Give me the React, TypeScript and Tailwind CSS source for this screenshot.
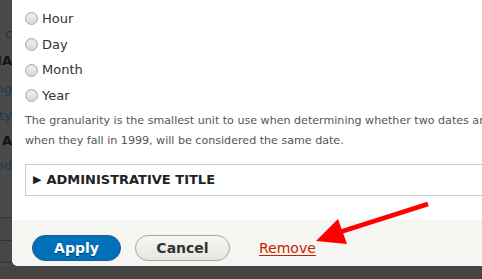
import React from "react";

const font = { fontFamily: '"DejaVu Sans", Verdana, sans-serif' };

function Radio({ label }: { label: string }) {
    return (
        <label className="flex items-center h-[25.7px] gap-[4px]">
            <span className="w-[13px] h-[13px] rounded-full border border-[#a9a9a9] bg-gradient-to-b from-[#f4f4f4] to-[#d6d6d6] shadow-[inset_0_1px_1px_rgba(0,0,0,0.1)]"></span>
            <span className="text-[13px] text-[#333]">{label}</span>
        </label>
    );
}

function Backdrop() {
    return (
        <div className="w-[12px] shrink-0 overflow-hidden bg-[#4a4a4a] flex flex-col items-end text-[13px] whitespace-nowrap">
            <div className="h-[21px]"></div>
            <div className="h-[26px] leading-[26px] text-[#2a2a2a]">line c</div>
            <div className="h-[28px] leading-[28px] font-bold text-[#111]">DIA</div>
            <div className="h-[27px] leading-[27px] text-[#1d3a55]">ing</div>
            <div className="h-[27px] leading-[27px] text-[#1d3a55]">at ty</div>
            <div className="h-[24px] leading-[24px] font-bold text-[#111]">A</div>
            <div className="h-[26px] leading-[26px] text-[#1d3a55]">ed</div>
            <div className="h-[38px]"></div>
            <div className="w-full h-[23px] border-t border-[#333] bg-[#474747]"></div>
            <div className="w-full h-[22px] border-t border-[#333] bg-[#474747]"></div>
            <div className="w-full flex-1 border-t border-[#333]"></div>
        </div>
    );
}

function Arrow() {
    return (
        <svg className="absolute left-0 top-0 pointer-events-none" width="482" height="279" viewBox="0 0 482 279">
            <line x1="428" y1="204" x2="340" y2="232" stroke="#ff0000" strokeWidth="4.5" strokeLinecap="butt" />
            <polygon points="316,241 338,219 347,244" fill="#ff0000" />
        </svg>
    );
}

export default function App() {
    return (
        <div className="relative w-[482px] h-[279px] overflow-hidden bg-[#444]" style={font}>
            <div className="flex h-[266px]">
                <Backdrop />
                <div className="w-[600px] shrink-0 bg-white rounded-bl-[6px] overflow-hidden flex flex-col">
                    <div className="flex-1 pl-[13px] pt-[6px]">
                        <Radio label="Hour" />
                        <Radio label="Day" />
                        <Radio label="Month" />
                        <Radio label="Year" />
                        <p className="mt-[2px] text-[11.1px] leading-[20px] text-[#555] whitespace-nowrap">
                            The granularity is the smallest unit to use when determining whether two dates are the same; for example, if the granularity is "Year" then all dates in 1999, regardless of<br />
                            when they fall in 1999, will be considered the same date.
                        </p>
                        <div className="mt-[13px] h-[32px] border border-[#ccc] flex items-center pl-[7px] gap-[5px]">
                            <span className="text-[11px] text-[#222] leading-none">▶</span>
                            <span className="text-[13px] font-bold text-[#222]">ADMINISTRATIVE TITLE</span>
                        </div>
                    </div>
                    <div className="h-[46px] bg-[#f5f5f2] flex items-start pl-[20px] pt-[15px]">
                        <button className="w-[89px] h-[26px] rounded-full bg-[#0071b8] border border-[#1e5c90] text-white text-[14px] font-bold [text-shadow:0_1px_rgba(0,0,0,0.5)]">
                            Apply
                        </button>
                        <button className="ml-[14px] w-[95px] h-[26px] rounded-full bg-gradient-to-b from-[#f6f6f3] to-[#e7e7df] border border-[#a6a6a6] text-[#333] text-[14px] font-bold">
                            Cancel
                        </button>
                        <a href="#" className="ml-[29px] mt-[3px] text-[14px] text-[#c72100] underline underline-offset-2">
                            Remove
                        </a>
                    </div>
                </div>
            </div>
            <Arrow />
        </div>
    );
}
